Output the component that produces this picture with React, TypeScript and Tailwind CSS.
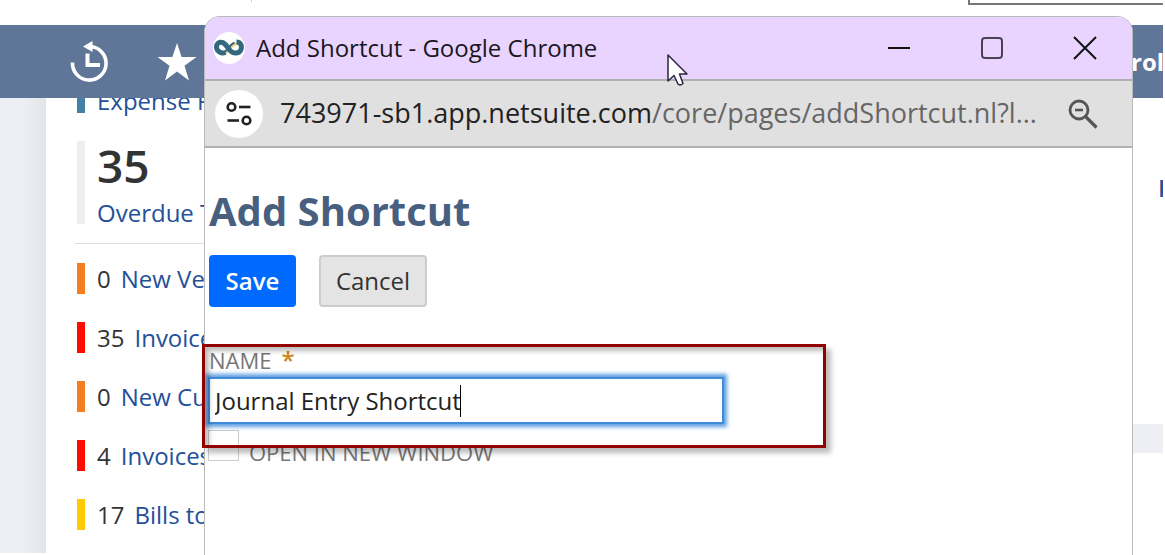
import React from "react";

type Reminder = { count: number; label: string; bar: string };

const reminders: Reminder[] = [
  { count: 0, label: "New Vendors", bar: "bg-[#f57f20]" },
  { count: 35, label: "Invoices Overdue", bar: "bg-[#ff0b00]" },
  { count: 0, label: "New Customers", bar: "bg-[#f57f20]" },
  { count: 4, label: "Invoices to Approve", bar: "bg-[#ff0b00]" },
  { count: 17, label: "Bills to Pay", bar: "bg-[#ffcb00]" },
];

function HistoryIcon() {
  return (
    <svg width="40" height="42" viewBox="0 0 40 42" fill="none" stroke="#fff">
      <path d="M2.500 21.500A16.800 16.800 0 1 0 20 5.500" strokeWidth="3.600" />
      <path d="M13 5.500 22.500 0V11z" fill="#fff" stroke="none" />
      <path d="M17.500 12.500V24H30" strokeWidth="4" />
    </svg>
  );
}

function StarIcon() {
  return (
    <svg width="40" height="38" viewBox="0 0 40 38" fill="#fff">
      <path d="M20 0 24.600 14H39.500L27.500 22.800 32 37.500 20 28.600 8 37.500 12.500 22.800.5 14H15.400z" />
    </svg>
  );
}

function Favicon() {
  return (
    <svg width="32" height="32" viewBox="0 0 32 32" fill="none">
      <circle cx="16" cy="16" r="16" fill="#fff" />
      <path d="M9 21.500C12.500 22.500 15 18.500 17 16C19 13.500 21 11.500 24 12" stroke="#f2cf82" strokeWidth="3" />
      <path
        d="M12.500 20.500C8 22 3.500 19 3.500 15C3.500 11.500 6.500 9.500 9.500 10.500C13 11.500 14.500 16 17.500 19C20.500 22 26.500 22 28 17.500C29.500 13 27 10 23.500 10"
        stroke="#33687f"
        strokeWidth="5"
      />
      <path d="M10 20.500C14 20 16 12.500 21.500 10.800" stroke="#33687f" strokeWidth="2" />
    </svg>
  );
}

function TuneIcon() {
  return (
    <svg width="26" height="26" viewBox="0 0 26 26" fill="none" stroke="#222" strokeWidth="2.600">
      <circle cx="5.500" cy="6" r="3.800" />
      <path d="M13 6H24.500" />
      <circle cx="20.500" cy="19.500" r="3.800" />
      <path d="M1.500 19.500H13" />
    </svg>
  );
}

function ZoomOutIcon() {
  return (
    <svg width="30" height="30" viewBox="0 0 30 30" fill="none" stroke="#555" strokeWidth="2.800">
      <circle cx="11" cy="11" r="9" />
      <path d="M7 11H15" strokeWidth="2.600" />
      <path d="M17.500 17.500 28.500 28.500" strokeWidth="3.200" />
    </svg>
  );
}

function Pointer() {
  return (
    <svg className="absolute top-9 left-[461px]" width="24" height="34" viewBox="0 0 24 34">
      <path
        d="M2 2V28L8 22.500 12 31Q14 33 17 30.500L13.500 21H21z"
        fill="#fff"
        stroke="#2b2340"
        strokeWidth="1.500"
        strokeLinejoin="round"
      />
    </svg>
  );
}

function Dashboard() {
  return (
    <div className="flex h-full flex-col text-2xl leading-8">
      <div className="flex h-[25px] shrink-0 justify-between">
        <div className="ml-[251px] h-[2px] w-px bg-[#ccc]" />
        <div className="h-[5px] w-[195px] border-b-2 border-l-2 border-[#777]" />
      </div>
      <nav className="flex h-[73px] shrink-0 items-center bg-[#5f7698] pl-[70px]">
        <button aria-label="Recent records">
          <HistoryIcon />
        </button>
        <button aria-label="Shortcuts" className="ml-[47px]">
          <StarIcon />
        </button>
        <span className="ml-auto w-8 overflow-hidden font-bold text-white">rol</span>
      </nav>
      <div className="flex min-h-0 flex-1 overflow-hidden bg-[#eeeff4]">
        <div className="w-[46px] shrink-0 bg-linear-to-r from-[#eeeff4] from-50% to-[#e2e4ea]" />
        <section className="flex-1 bg-white pl-[29px]">
          <div className="flex h-[15px] items-end pl-[2px]">
            <div className="h-full w-2 bg-[#4581a6]" />
            <a href="#expense" className="ml-3 leading-6 font-medium whitespace-nowrap text-[#24509a]">
              Expense Reports
            </a>
          </div>
          <div className="mt-7 flex pl-[2px]">
            <div className="h-[83px] w-2 bg-[#eee]" />
            <div className="ml-3">
              <div className="text-[46px] leading-[48px] font-semibold text-[#333]">35</div>
              <a href="#overdue" className="mt-2 block font-medium text-[#24509a]">
                Overdue Tasks
              </a>
            </div>
          </div>
          <div className="mt-[14px] mb-[19px] h-px bg-[#ddd]" />
          <ul className="flex flex-col gap-7 pl-[2px]">
            {reminders.map((r, i) => (
              <li key={i} className="flex h-[31px] items-center">
                <span className={`h-full w-2 ${r.bar}`} />
                <span className="ml-3 font-medium text-[#333]">{r.count}</span>
                <a href="#reminder" className="ml-[10px] font-medium text-[#24509a]">
                  {r.label}
                </a>
              </li>
            ))}
          </ul>
        </section>
        <div className="flex w-10 shrink-0 flex-col">
          <div className="flex h-[326px] justify-end overflow-hidden bg-white pt-[74px]">
            <a href="#more" className="w-[5px] font-semibold text-[#24509a]">I</a>
          </div>
          <div className="mt-[29px] flex-1 bg-white" />
        </div>
      </div>
    </div>
  );
}

function PopupWindow() {
  return (
    <div className="absolute top-4 right-8 bottom-0 left-[204px] flex flex-col rounded-t-[16px] border border-b-0 border-[#bbb] bg-white">
      <header className="flex h-[62px] shrink-0 items-center rounded-t-[15px] bg-[#e9d4ff] pr-[35px] pl-2">
        <Favicon />
        <h2 className="ml-[11px] text-2xl text-[#1b1720]">Add Shortcut - Google Chrome</h2>
        <div className="ml-auto flex items-center gap-[69px]">
          <button aria-label="Minimize">
            <svg width="24" height="24" stroke="#111" strokeWidth="2">
              <path d="M1 12H23" />
            </svg>
          </button>
          <button aria-label="Maximize">
            <svg width="24" height="24" fill="none" stroke="#4a4255" strokeWidth="2">
              <rect x="2" y="2" width="20" height="20" rx="3" />
            </svg>
          </button>
          <button aria-label="Close">
            <svg width="24" height="24" stroke="#111" strokeWidth="2">
              <path d="M1 1 23 23M23 1 1 23" />
            </svg>
          </button>
        </div>
      </header>
      <div className="flex h-[69px] shrink-0 items-center border-y-2 border-[#b0b0b0] bg-[#e0e0e0] pr-[34px] pl-[10px]">
        <button aria-label="Site settings" className="flex size-12 shrink-0 items-center justify-center rounded-full bg-white">
          <TuneIcon />
        </button>
        <div className="ml-[17px] flex-1 text-[27px] whitespace-nowrap text-[#666]">
          <span className="text-[#222]">743971-sb1.app.netsuite.com</span>/core/pages/addShortcut.nl?l...
        </div>
        <button aria-label="Zoom">
          <ZoomOutIcon />
        </button>
      </div>
      <form className="pt-[39px] pl-1" onSubmit={(e) => e.preventDefault()}>
        <h1 className="text-[40px] leading-[48px] font-bold text-[#485f7f]">Add Shortcut</h1>
        <div className="mt-5 flex gap-[23px]">
          <button className="h-[52px] w-[87px] rounded bg-[#0069ff] text-2xl font-semibold text-white">Save</button>
          <button type="button" className="h-[52px] w-[108px] rounded border-2 border-[#ccc] bg-[#e4e4e4] text-2xl font-medium text-[#333]">
            Cancel
          </button>
        </div>
        <div className="relative -ml-px mt-[37px] pt-[2px]">
          <label htmlFor="shortcut-name" className="mb-[3px] flex gap-[10px] pl-px text-[22px] leading-7 text-[#777]">
            NAME <span className="text-2xl leading-7 font-semibold text-[#cf8420]">*</span>
          </label>
          <div className="relative w-[516px]">
            <input
              id="shortcut-name"
              defaultValue="Journal Entry Shortcut"
              className="block h-[47px] w-full border-2 border-[#3f8cdd] bg-white pl-[5px] text-2xl text-[#222] shadow-[0_0_4px_3px_#5f9fe2] outline-none"
            />
            <span className="absolute top-2 left-[252px] h-8 w-px bg-black" />
          </div>
          <label className="mt-[6px] flex items-end gap-[10px] text-[22px] leading-7 text-[#777]">
            <input type="checkbox" className="size-[31px] shrink-0 appearance-none border border-[#ccc] bg-white" />
            <span className="h-[23px]">OPEN IN NEW WINDOW</span>
          </label>
          <div className="pointer-events-none absolute top-0 -left-[6px] h-[104px] w-[624px] border-3 border-[#930000] shadow-[5px_5px_5px_#0004,inset_4px_4px_5px_#0004]" />
        </div>
      </form>
      <Pointer />
    </div>
  );
}

export default function App() {
  return (
    <main className="relative h-screen overflow-hidden bg-white pr-[2px] pb-[2px] font-['Open_Sans','Noto_Sans',sans-serif]">
      <Dashboard />
      <PopupWindow />
    </main>
  );
}
